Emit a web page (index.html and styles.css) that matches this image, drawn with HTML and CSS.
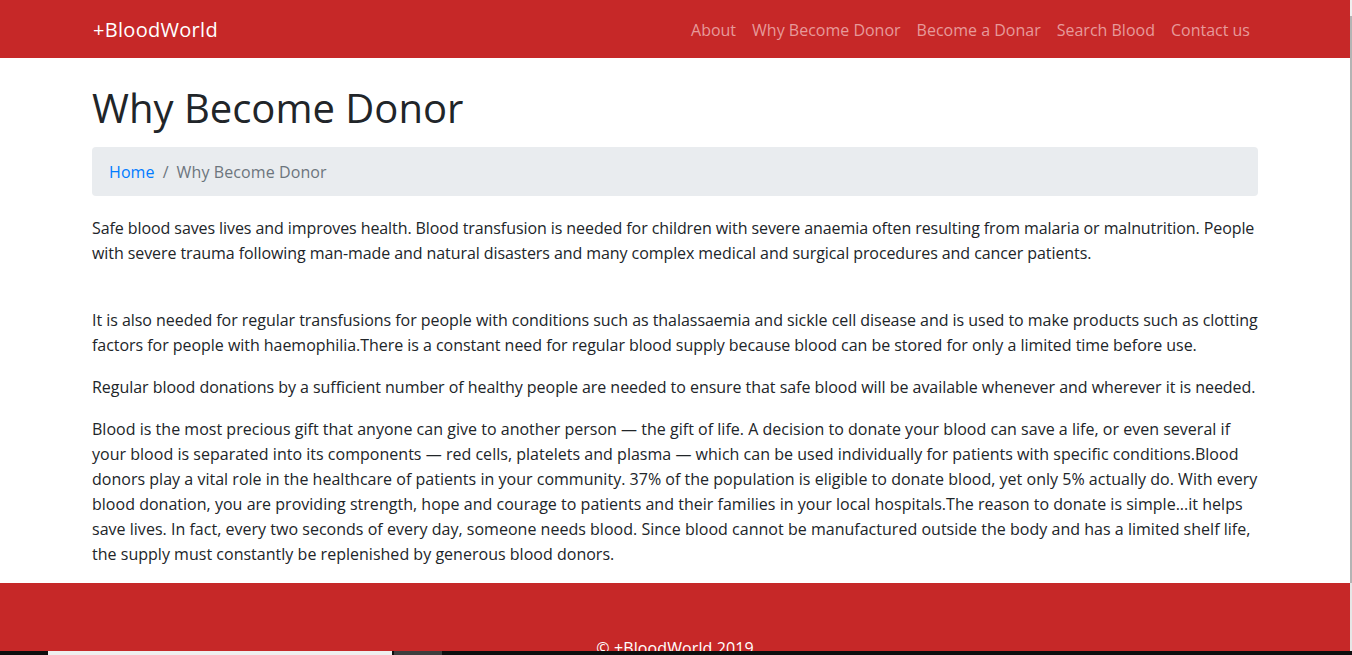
FILE: index.html
```
<!DOCTYPE html>
<html lang="en">
<head>
<meta charset="utf-8">
<title>Why Become Donor - BloodWorld</title>
<link rel="stylesheet" href="styles.css">
</head>
<body>
<div class="page">
  <nav class="navbar">
    <div class="container nav-inner">
      <a class="brand" href="#">+BloodWorld</a>
      <ul class="nav-links">
        <li><a href="#">About</a></li>
        <li><a href="#">Why Become Donor</a></li>
        <li><a href="#">Become a Donar</a></li>
        <li><a href="#">Search Blood</a></li>
        <li><a href="#">Contact us</a></li>
      </ul>
    </div>
  </nav>

  <main class="container main">
    <h1 class="title">Why Become Donor</h1>
    <ol class="breadcrumb">
      <li><a href="#">Home</a></li>
      <li class="sep">/</li>
      <li class="active">Why Become Donor</li>
    </ol>
    <p class="p-intro">Safe blood saves lives and improves health. Blood transfusion is needed for children with severe anaemia often resulting from malaria or malnutrition. People with severe trauma following man-made and natural disasters and many complex medical and surgical procedures and cancer patients.<br><br></p>
    <p class="p-mid">It is also needed for regular transfusions for people with conditions such as thalassaemia and sickle cell disease and is used to make products such as clotting factors for people with haemophilia.There is a constant need for regular blood supply because blood can be stored for only a limited time before use.</p>
    <p class="p-mid">Regular blood donations by a sufficient number of healthy people are needed to ensure that safe blood will be available whenever and wherever it is needed.</p>
    <p class="p-long">Blood is the most precious gift that anyone can give to another person — the gift of life. A decision to donate your blood can save a life, or even several if your blood is separated into its components — red cells, platelets and plasma — which can be used individually for patients with specific conditions.Blood donors play a vital role in the healthcare of patients in your community. 37% of the population is eligible to donate blood, yet only 5% actually do. With every blood donation, you are providing strength, hope and courage to patients and their families in your local hospitals.The reason to donate is simple...it helps save lives. In fact, every two seconds of every day, someone needs blood. Since blood cannot be manufactured outside the body and has a limited shelf life, the supply must constantly be replenished by generous blood donors.</p>
  </main>

  <footer class="footer">
    <p>© +BloodWorld 2019</p>
  </footer>
</div>

<div class="scrollbar"><div class="sb-top"></div><div class="sb-thumb"></div><div class="sb-rest"></div></div>
<div class="taskbar"><span class="tb-a"></span><span class="tb-b"></span><span class="tb-c"></span><span class="tb-d"></span></div>
</body>
</html>
```
FILE: styles.css
```
html{overflow:hidden;}
body{
  margin:0;
  font-family:"Open Sans","Noto Sans",sans-serif;
  font-size:16px;
  line-height:25px;
  color:#212529;
  background:#fff;
}
.page{width:1350px;}
a{text-decoration:none;}
.container{width:1166px;margin:0 auto;}

.navbar{background:#c62828;height:58px;}
.nav-inner{display:flex;align-items:center;justify-content:space-between;height:58px;padding-top:2px;box-sizing:border-box;}
.brand{color:#fff;font-size:20px;line-height:30px;letter-spacing:0.3px;margin-left:1px;}
.nav-links{list-style:none;margin:0;padding:0;display:flex;}
.nav-links a{display:block;padding:0 8px;color:#e69a9a;font-size:16px;line-height:30px;letter-spacing:0;}

.main{padding-top:26px;}
.title{font-size:40px;line-height:48px;font-weight:400;margin:0 0 15px 0;letter-spacing:0;}
.breadcrumb{list-style:none;margin:0 0 20px 0;padding:13px 16px 11px 17px;background:#e9ecef;border-radius:4px;display:flex;gap:8px;line-height:25px;letter-spacing:0.1px;}
.breadcrumb a{color:#007bff;}
.breadcrumb .sep{color:#6c757d;}
.breadcrumb .active{color:#6c757d;}
.main p{margin:0 0 17px 0;}
.main p:last-child{margin-bottom:16px;}
.p-intro{letter-spacing:-0.08px;}
.p-mid{letter-spacing:-0.04px;}
.p-long{letter-spacing:0.02px;}

.footer{background:#c62828;color:#fff;text-align:center;padding-top:53px;height:120px;}
.footer p{margin:0;letter-spacing:0.1px;}

.scrollbar{position:fixed;right:0;top:0;bottom:4px;width:2px;display:flex;flex-direction:column;}
.sb-top{height:16px;background:#efefef;}
.sb-thumb{height:567px;background:#b4b4b4;}
.sb-rest{flex:1;background:#e6e6e6;}
.taskbar{position:fixed;left:0;right:0;bottom:0;height:4px;display:flex;background:#0e0e0e;}
.tb-a{width:48px;}
.tb-b{width:344px;background:#efefef;}
.tb-c{width:2px;}
.tb-d{width:48px;background:#3e3e3e;}
```
